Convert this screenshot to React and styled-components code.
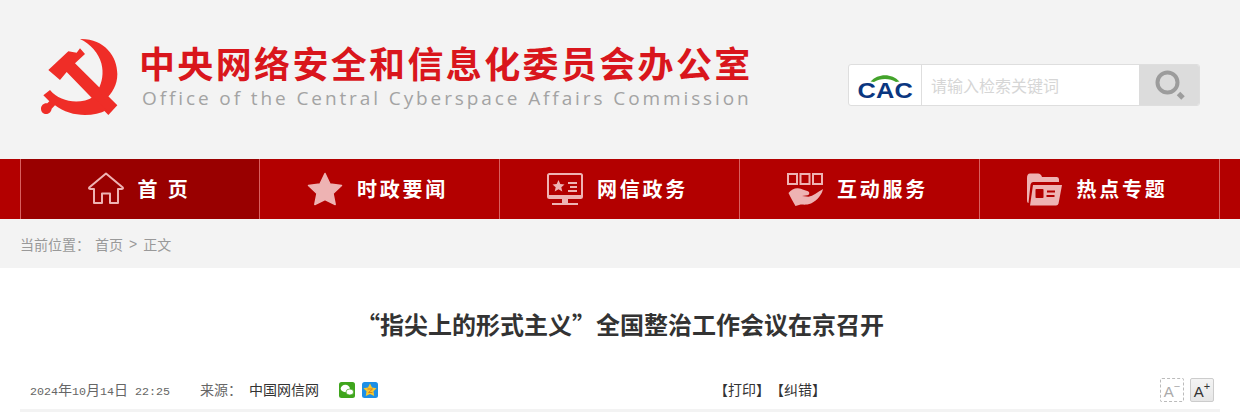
import React from "react";
import styled, { createGlobalStyle } from "styled-components";

const CJK = `"Noto Sans CJK SC", "Liberation Sans", sans-serif`;

const Global = createGlobalStyle`
  html, body { margin: 0; padding: 0; background: #fff; overflow: hidden; }
  body { font-family: ${CJK}; text-spacing-trim: space-all; }
  * { box-sizing: border-box; }
`;

const Page = styled.div`
  width: 1240px;
  height: 413px;
  overflow: hidden;
`;

const Header = styled.header`
  height: 159px;
  background: #f3f3f3;
  padding: 30px 40px 0 30px;
  display: flex;
  justify-content: space-between;
`;

const Brand = styled.div`
  display: flex;
  gap: 9px;
`;

const Emblem = styled.svg`
  width: 100px;
  height: 100px;
  flex: none;
`;

const BrandText = styled.div`
  display: flex;
  flex-direction: column;
  padding-top: 10px;
`;

const BrandName = styled.div`
  font-size: 36px;
  line-height: 44px;
  font-weight: 700;
  letter-spacing: 2.35px;
  color: #d9161c;
  white-space: nowrap;
`;

const BrandEnglish = styled.div`
  font-family: "Open Sans", sans-serif;
  font-size: 19px;
  line-height: 26px;
  margin: 1px 0 0 3px;
  letter-spacing: 2.9px;
  color: #a3a3a3;
  white-space: nowrap;
`;

const Search = styled.div`
  margin: 34px 0 0 0;
  width: 352px;
  height: 42px;
  border: 1px solid #dedede;
  border-radius: 3px;
  background: #fff;
  display: flex;
  overflow: hidden;
`;

const SearchLogo = styled.div`
  width: 73px;
  flex: none;
  border-right: 1px solid #dedede;
  display: flex;
  flex-direction: column;
  align-items: center;
  padding-top: 9px;
`;

const LogoArc = styled.svg`
  width: 30px;
  height: 8px;
  display: block;
`;

const LogoLetters = styled.span`
  font-family: "Liberation Sans", sans-serif;
  font-weight: 700;
  font-size: 22px;
  line-height: 17px;
  height: 17px;
  color: #0a3680;
  transform: scaleX(1.15);
  letter-spacing: 0.2px;
`;

const SearchInput = styled.div`
  flex: 1;
  padding-left: 9px;
  font-size: 16px;
  line-height: 40px;
  color: #d6d6d6;
`;

const SearchButton = styled.div`
  width: 60px;
  flex: none;
  background: #dcdcdc;
  display: flex;
  align-items: center;
  justify-content: center;
`;

const Nav = styled.nav`
  height: 60px;
  background: #b30000;
  padding: 0 20px;
  display: flex;
`;

const NavItem = styled.a`
  width: 240px;
  height: 60px;
  flex: none;
  display: flex;
  align-items: center;
  justify-content: center;
  gap: 14px;
  padding-right: 4px;
  border-left: 1px solid #d9605f;
  background: ${p => (p.$active ? "#990000" : "transparent")};
  &:first-child { width: 239px; padding-right: 2px; }
  &:last-child { width: 241px; padding-right: 5px; border-right: 1px solid #d9605f; }
`;

const NavIcon = styled.svg`
  width: 36px;
  height: 36px;
  flex: none;
  color: #eeb3b3;
`;

const NavLabel = styled.span`
  font-size: 20px;
  line-height: 28px;
  font-weight: 700;
  letter-spacing: 2.8px;
  color: #fff;
  white-space: pre;
  margin-bottom: 1px;
`;

const Crumbs = styled.div`
  height: 49px;
  background: #f3f3f3;
  padding: 0 20px;
  display: flex;
  align-items: center;
  font-size: 14px;
  color: #999;
`;

const CrumbLead = styled.span`
  width: 75px;
`;

const CrumbSep = styled.span`
  margin: 0 6px;
  font-family: "Liberation Sans", sans-serif;
`;

const Title = styled.h1`
  margin: 0;
  padding-top: 42px;
  height: 103px;
  font-size: 24px;
  line-height: 28px;
  font-weight: 700;
  color: #333;
  text-align: center;
`;

const Meta = styled.div`
  margin: 0 20px;
  height: 41px;
  border-bottom: 3px solid #f3f3f3;
  padding: 0 6px 0 10px;
  display: grid;
  grid-template-columns: 684px 1fr auto;
  align-items: center;
  font-size: 14px;
  color: #666;
`;

const MetaLeft = styled.div`
  display: flex;
  align-items: center;
`;

const MetaText = styled.span`
  margin-bottom: 2px;
  white-space: pre;
`;

const DateText = styled(MetaText)`
  width: 170px;
`;

const Num = styled.span`
  font-family: "Liberation Mono", monospace;
  font-size: 11.67px;
`;

const SourceLabel = styled(MetaText)`
  width: 49px;
`;

const SourceName = styled(MetaText)`
  width: 90px;
  color: #333;
`;

const ShareIcons = styled.div`
  display: flex;
  gap: 7px;
`;

const ShareIcon = styled.svg`
  width: 16px;
  height: 16px;
  display: block;
`;

const Tools = styled(MetaText)`
  color: #333;
`;

const SizeButtons = styled.div`
  display: flex;
  gap: 6px;
`;

const SizeButton = styled.span`
  width: 24px;
  height: 24px;
  border-radius: 2px;
  border: 1px ${p => (p.$on ? "solid #ccc" : "dashed #bbb")};
  background: ${p => (p.$on ? "linear-gradient(#f4f4f4,#e6e6e6)" : "#fff")};
  color: ${p => (p.$on ? "#333" : "#aaa")};
  font-family: "Liberation Sans", sans-serif;
  font-size: 15px;
  line-height: 25px;
  display: flex;
  justify-content: center;
`;

const SizeMark = styled.span`
  font-size: 11px;
  line-height: 14px;
`;

const Home = () => (
  <NavIcon viewBox="0 0 36 36">
    <path d="M18 2.5 L1.2 16.5 Q0.6 18 2.5 18 H6 V32 H14 V22.5 H22 V32 H30 V18 H33.5 Q35.4 18 34.8 16.5 Z" fill="none" stroke="currentColor" strokeWidth="2" strokeLinejoin="round" />
  </NavIcon>
);

const Star = () => (
  <NavIcon viewBox="0 0 36 36">
    <path d="M18 2.5 L23 13 L34.5 14.5 L26 22.5 L28.2 33.5 L18 28.5 L7.8 33.5 L10 22.5 L1.5 14.5 L13 13 Z" fill="currentColor" stroke="currentColor" strokeWidth="1.5" strokeLinejoin="round" />
  </NavIcon>
);

const Monitor = () => (
  <NavIcon viewBox="0 0 36 36">
    <rect x="1" y="3" width="34" height="24" rx="1.5" fill="none" stroke="currentColor" strokeWidth="2" />
    <path d="M2 24 H34 V27 H2 Z M15 27 H21 V32 H15 Z M5 32 H31 V34 H5 Z" fill="currentColor" />
    <path d="M11.5 9 L13.3 13 L17.5 13.4 L14.3 16.2 L15.3 20.4 L11.5 18.2 L7.7 20.4 L8.7 16.2 L5.5 13.4 L9.7 13 Z" fill="currentColor" />
    <path d="M21 12 H30 M23 16 H30 M21 20 H30" fill="none" stroke="currentColor" strokeWidth="1.8" />
  </NavIcon>
);

const Hand = () => (
  <NavIcon viewBox="0 0 36 36">
    <g fill="none" stroke="currentColor" strokeWidth="2">
      <rect x="1" y="3" width="9" height="10" />
      <rect x="13.5" y="3" width="9" height="10" />
      <rect x="26" y="3" width="9" height="10" />
    </g>
    <path d="M1.5 22 C4 18.5 8 17 11 17.3 C15 17.8 18 19.5 21 20.3 C23 21.2 22.5 24 20.5 24.3 L15 25 L21.5 25.8 C26 25 31 21 36 18 C35 23 31 29 24 32.5 C19 34.5 15 33 12 34 L8.5 35 C6 31 3.5 26 1.5 22 Z" fill="currentColor" />
  </NavIcon>
);

const Folder = () => (
  <NavIcon viewBox="0 0 36 36">
    <path d="M1 7 Q1 2.5 4 2.5 H12 Q15 2.5 16 6 H31 Q33 6 33 8.5 V11 H7 Q5 11 4.5 13.5 L2.5 32 Q1 32 1 29 Z" fill="currentColor" />
    <path d="M7 14 H36 L32.5 32.5 Q32 34.5 30 34.5 H4 Z" fill="currentColor" />
    <rect x="9.5" y="18" width="8" height="9" rx="0.8" fill="#b30000" />
    <path d="M21 20.5 H29 M20.5 25 H28.5" fill="none" stroke="#b30000" strokeWidth="1.8" />
  </NavIcon>
);

const App = () => (
  <Page>
    <Global />
    <Header>
      <Brand>
        <Emblem viewBox="0 0 300 300">
          <path d="M55 120 L115 64 L140 68 L150 55 L165 72 L135 100 L262 226 L235 255 L110 126 L90 150 Z" fill="#ef2d27" />
          <path d="M150 27 C222 25 262 78 262 132 C262 165 247 190 224 210 L205 178 C216 158 222 130 214 100 C206 70 182 42 150 27 Z" fill="#ef2d27" />
          <path d="M60 180 C90 216 150 226 190 200 L230 240 C190 262 120 262 75 226 L65 236 C62 258 33 256 33 236 C33 226 42 218 52 220 L58 214 L40 196 Z" fill="#ef2d27" />
        </Emblem>
        <BrandText>
          <BrandName>中央网络安全和信息化委员会办公室</BrandName>
          <BrandEnglish>Office of the Central Cyberspace Affairs Commission</BrandEnglish>
        </BrandText>
      </Brand>
      <Search>
        <SearchLogo>
          <LogoArc viewBox="0 0 30 8">
            <path d="M0.5 7.5 C8 -1 22 -1 29.5 7.5 L26 8 C20 4 10 4 4 8 Z" fill="#43a32b" />
          </LogoArc>
          <LogoLetters>CAC</LogoLetters>
        </SearchLogo>
        <SearchInput>请输入检索关键词</SearchInput>
        <SearchButton>
          <svg width="32" height="32" viewBox="0 0 32 32">
            <circle cx="14.5" cy="13.5" r="10" fill="none" stroke="#9c9c9c" strokeWidth="4" />
            <path d="M25.5 24.5 L30 29" stroke="#9c9c9c" strokeWidth="5" />
          </svg>
        </SearchButton>
      </Search>
    </Header>
    <Nav>
      <NavItem $active><Home /><NavLabel>首 页</NavLabel></NavItem>
      <NavItem><Star /><NavLabel>时政要闻</NavLabel></NavItem>
      <NavItem><Monitor /><NavLabel>网信政务</NavLabel></NavItem>
      <NavItem><Hand /><NavLabel>互动服务</NavLabel></NavItem>
      <NavItem><Folder /><NavLabel>热点专题</NavLabel></NavItem>
    </Nav>
    <Crumbs>
      <CrumbLead>当前位置：</CrumbLead>
      <span>首页</span>
      <CrumbSep>&gt;</CrumbSep>
      <span>正文</span>
    </Crumbs>
    <Title>“指尖上的形式主义”全国整治工作会议在京召开</Title>
    <Meta>
      <MetaLeft>
        <DateText><Num>2024</Num>年<Num>10</Num>月<Num>14</Num>日<Num> 22:25</Num></DateText>
        <SourceLabel>来源：</SourceLabel>
        <SourceName>中国网信网</SourceName>
        <ShareIcons>
          <ShareIcon viewBox="0 0 16 16">
            <rect width="16" height="16" rx="2.5" fill="#3fa51d" />
            <ellipse cx="6.3" cy="6.5" rx="4.6" ry="3.7" fill="#fff" />
            <ellipse cx="10.8" cy="10" rx="3.8" ry="3" fill="#fff" stroke="#3fa51d" strokeWidth="0.7" />
          </ShareIcon>
          <ShareIcon viewBox="0 0 16 16">
            <rect width="16" height="16" rx="2.5" fill="#1d8fe6" />
            <path d="M8 1.5 L10 5.6 L14.6 6.2 L11.5 9.3 L12.2 14 L8 11.9 L3.8 14 L4.5 9.3 L1.4 6.2 L6 5.6 Z" fill="#f8c72c" />
            <path d="M5.5 7 H10.5 L6.5 10.5 H10.5" fill="none" stroke="#d9821c" strokeWidth="1" />
          </ShareIcon>
        </ShareIcons>
      </MetaLeft>
      <Tools>【打印】【纠错】</Tools>
      <SizeButtons>
        <SizeButton>A<SizeMark>−</SizeMark></SizeButton>
        <SizeButton $on>A<SizeMark>+</SizeMark></SizeButton>
      </SizeButtons>
    </Meta>
  </Page>
);

export default App;
